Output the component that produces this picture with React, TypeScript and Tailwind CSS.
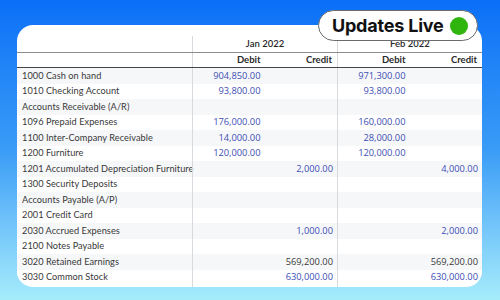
const rows: [string, string, string, string, string][] = [
  ['1000 Cash on hand', '904,850.00', '', '971,300.00', ''],
  ['1010 Checking Account', '93,800.00', '', '93,800.00', ''],
  ['Accounts Receivable (A/R)', '', '', '', ''],
  ['1096 Prepaid Expenses', '176,000.00', '', '160,000.00', ''],
  ['1100 Inter-Company Receivable', '14,000.00', '', '28,000.00', ''],
  ['1200 Furniture', '120,000.00', '', '120,000.00', ''],
  ['1201 Accumulated Depreciation Furniture', '', '2,000.00', '', '4,000.00'],
  ['1300 Security Deposits', '', '', '', ''],
  ['Accounts Payable (A/P)', '', '', '', ''],
  ['2001 Credit Card', '', '', '', ''],
  ['2030 Accrued Expenses', '', '1,000.00', '', '2,000.00'],
  ['2100 Notes Payable', '', '', '', ''],
  ['3020 Retained Earnings', '', '569,200.00', '', '569,200.00'],
  ['3030 Common Stock', '', '630,000.00', '', '630,000.00'],
];

// retained earnings shows in plain dark text, the rest are links
const darkRows = new Set(['3020 Retained Earnings']);

function Num({ value, dark, first }: { value: string; dark: boolean; first?: boolean }) {
  return (
    <div
      className={`w-[72.5px] h-full flex items-center justify-end pr-[4px] font-['Open_Sans',sans-serif] text-[9.3px] ${
        first ? 'border-l border-[#d6d9de]' : ''
      } ${dark ? 'text-[#3a3a3a]' : 'text-[#3d4eb5]'}`}
    >
      {value}
    </div>
  );
}

export default function App() {
  return (
    <div className="relative w-[500px] h-[300px] overflow-hidden bg-gradient-to-b from-[#0a6ff7] via-[#3a9cf6] to-[#a6ecfb]">
      <div className="pt-[25px] pl-[17px]">
        <div className="w-[465px] h-[262px] bg-white rounded-[16px] overflow-hidden">
          {/* spacer above month headers */}
          <div className="h-[11px]" />

          {/* month row */}
          <div className="flex h-[17px] border-b-[1.5px] border-[#8c8c8c] font-['Lato',sans-serif] text-[9.5px] font-semibold text-[#2a2a2a]">
            <div className="w-[175px]" />
            <div className="w-[145px] border-l border-[#d6d9de] flex items-center justify-center">Jan 2022</div>
            <div className="w-[145px] border-l border-[#d6d9de] flex items-center justify-center">Feb 2022</div>
          </div>

          {/* debit / credit row */}
          <div className="flex h-[15px] border-b-[1.5px] border-[#454545] font-['Lato',sans-serif] text-[9.5px] font-bold text-[#2a2a2a]">
            <div className="w-[175px]" />
            <div className="w-[72.5px] border-l border-[#d6d9de] flex items-center justify-end pr-[4px]">Debit</div>
            <div className="w-[72.5px] flex items-center justify-end pr-[5px]">Credit</div>
            <div className="w-[72.5px] border-l border-[#d6d9de] flex items-center justify-end pr-[4px]">Debit</div>
            <div className="w-[72.5px] flex items-center justify-end pr-[5px]">Credit</div>
          </div>

          {rows.map(([label, jd, jc, fd, fc], i) => {
            const dark = darkRows.has(label);
            return (
              <div key={label} className={`flex h-[15.5px] ${i % 2 === 0 ? 'bg-[#f6f7f9]' : 'bg-white'}`}>
                <div className="w-[175px] pl-[5px] flex items-center whitespace-nowrap font-['Lato',sans-serif] text-[9.2px] tracking-[0.05px] text-[#383838]">
                  {label}
                </div>
                <Num value={jd} dark={dark} first />
                <Num value={jc} dark={dark} />
                <Num value={fd} dark={dark} first />
                <Num value={fc} dark={dark} />
              </div>
            );
          })}
          <div className="flex h-full">
            <div className="w-[175px]" />
            <div className="w-[145px] border-l border-[#d6d9de]" />
            <div className="w-[145px] border-l border-[#d6d9de]" />
          </div>
        </div>
      </div>

      {/* live badge */}
      <div className="absolute left-[318px] top-[10px] w-[160px] h-[31px] rounded-full bg-white border border-[#6b6b6b] flex items-center pl-[13px] pr-[9px]">
        <span className="font-['Inter',sans-serif] text-[18px] font-bold text-[#111] tracking-[-0.2px]">Updates Live</span>
        <span className="ml-auto w-[18px] h-[18px] rounded-full bg-[#2fb50e]" />
      </div>
    </div>
  );
}
